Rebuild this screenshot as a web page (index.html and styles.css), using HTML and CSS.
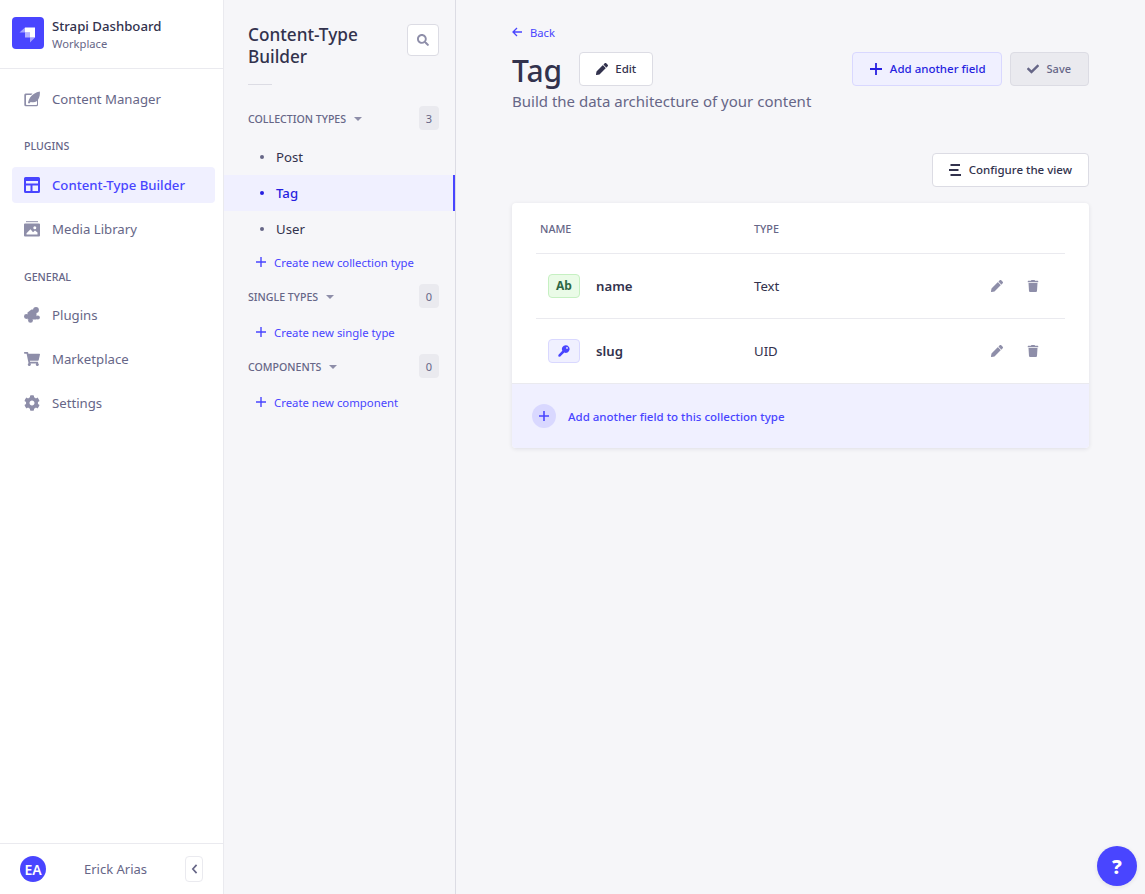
FILE: index.html
```html
<!DOCTYPE html>
<html lang="en">
<head>
    <meta charset="UTF-8">
    <title>Strapi Dashboard</title>
    <meta name="viewport" content="width=device-width, initial-scale=1.0">
    <link rel="stylesheet" href="styles.css">
</head>
<body>
    <div class="app">
        <aside class="sidebar">
            <div class="brand">
                <div class="brand-logo">
                    <svg viewBox="0 0 32 32" width="32" height="32">
                        <path d="M13 10.500h10v10h-5v-5h-5z" fill="#fff"/>
                        <path d="M13 10.500v5H7.500z" fill="#fff" opacity=".5"/>
                        <path d="M13 15.500h5v5h-5z" fill="#fff" opacity=".6"/>
                        <path d="M18 20.500h5l-5 5z" fill="#fff" opacity=".5"/>
                    </svg>
                </div>
                <div class="brand-text">
                    <div class="brand-name">Strapi Dashboard</div>
                    <div class="brand-sub">Workplace</div>
                </div>
            </div>

            <nav class="nav">
                <a class="nav-item">
                    <svg class="nav-icon" viewBox="0 0 16 16"><path d="M2 2.500h6.500L7.200 4H2.700a.7.7 0 0 0-.7.7v8.600c0 .4.300.7.7.7h9.600c.4 0 .7-.3.700-.7V9l1-1.200v6a1.500 1.500 0 0 1-1.500 1.500H1.800A1.500 1.500 0 0 1 .3 13.800V4a1.500 1.500 0 0 1 1.700-1.500z"/><path d="M15.800.5c.5 3.800-.6 7.800-3.200 9.800-1.600 1.200-4 1.300-5.900.6L5.200 12.600 4 12c1-4.500 3.500-9.800 11.800-11.500z"/></svg>
                    Content Manager
                </a>
                <div class="nav-label nav-label-first">PLUGINS</div>
                <a class="nav-item active">
                    <svg class="nav-icon" viewBox="0 0 16 16"><path fill-rule="evenodd" d="M1.500 0h13A1.500 1.500 0 0 1 16 1.500v13a1.500 1.500 0 0 1-1.500 1.500h-13A1.500 1.500 0 0 1 0 14.500v-13A1.500 1.500 0 0 1 1.500 0zM2 4v2.500h12V4zM2 8.500V14h4.500V8.500zM8.500 8.500V14H14V8.500z"/></svg>
                    Content-Type Builder
                </a>
                <a class="nav-item">
                    <svg class="nav-icon" viewBox="0 0 16 16"><path d="M2 0h12v1.200H2z" opacity=".8"/><path fill-rule="evenodd" d="M1 2.500h14a1 1 0 0 1 1 1v11a1 1 0 0 1-1 1H1a1 1 0 0 1-1-1v-11a1 1 0 0 1 1-1zm9.800 2.700a1.500 1.500 0 1 0 0 3 1.500 1.500 0 0 0 0-3zM2.500 13.500h11v-2l-2.500-2-2 1.700-2.500-3-4 4z"/></svg>
                    Media Library
                </a>
                <div class="nav-label">GENERAL</div>
                <a class="nav-item">
                    <svg class="nav-icon" viewBox="0 0 16 16"><path d="M3.500 5.500L7.500 2.500h5v10H3.500z"/><circle cx="12" cy="3" r="2.900"/><circle cx="2.400" cy="9.500" r="2.400"/><circle cx="6.500" cy="13.400" r="2.400"/><circle cx="13.800" cy="10.500" r="2.100"/></svg>
                    Plugins
                </a>
                <a class="nav-item">
                    <svg class="nav-icon" viewBox="0 0 576 512"><path d="M528.120 301.319l47.273-208C578.806 78.301 567.391 64 551.990 64H159.208l-9.166-44.810C147.758 8.021 137.930 0 126.529 0H24C10.745 0 0 10.745 0 24v16c0 13.255 10.745 24 24 24h69.883l70.248 343.435C147.325 417.100 136 435.222 136 456c0 30.928 25.072 56 56 56s56-25.072 56-56c0-15.674-6.447-29.835-16.824-40h209.647C430.447 426.165 424 440.326 424 456c0 30.928 25.072 56 56 56s56-25.072 56-56c0-22.172-12.888-41.332-31.579-50.405l5.517-24.276c3.413-15.018-8.002-29.319-23.403-29.319H218.117l-6.545-32h293.145c11.206 0 20.920-7.754 23.403-18.681z"/></svg>
                    Marketplace
                </a>
                <a class="nav-item">
                    <svg class="nav-icon" viewBox="0 0 512 512"><path d="M487.400 315.700l-42.600-24.600c4.300-23.200 4.300-47 0-70.200l42.600-24.600c4.900-2.800 7.100-8.600 5.500-14-11.100-35.600-30-67.800-54.700-94.600-3.800-4.100-10-5.100-14.800-2.300L380.800 110c-17.900-15.400-38.500-27.300-60.800-35.100V25.800c0-5.600-3.900-10.500-9.400-11.700-36.700-8.200-74.300-7.800-109.200 0-5.500 1.200-9.400 6.100-9.400 11.700V75c-22.200 7.900-42.800 19.800-60.800 35.100L88.700 85.500c-4.900-2.800-11-1.900-14.800 2.300-24.700 26.700-43.600 58.900-54.700 94.600-1.700 5.400.6 11.200 5.500 14L67.300 221c-4.300 23.200-4.300 47 0 70.200l-42.600 24.600c-4.900 2.800-7.100 8.600-5.500 14 11.100 35.600 30 67.800 54.700 94.600 3.800 4.100 10 5.100 14.800 2.300l42.600-24.600c17.900 15.400 38.500 27.300 60.800 35.100v49.200c0 5.600 3.900 10.500 9.400 11.700 36.700 8.200 74.300 7.800 109.200 0 5.500-1.200 9.400-6.100 9.400-11.700v-49.200c22.200-7.900 42.800-19.800 60.800-35.100l42.600 24.600c4.900 2.800 11 1.900 14.800-2.300 24.700-26.700 43.600-58.900 54.700-94.600 1.500-5.500-.7-11.300-5.600-14.100zM256 336c-44.100 0-80-35.900-80-80s35.900-80 80-80 80 35.900 80 80-35.900 80-80 80z"/></svg>
                    Settings
                </a>
            </nav>

            <div class="user">
                <div class="avatar">EA</div>
                <div class="user-name">Erick Arias</div>
                <button class="collapse">
                    <svg viewBox="0 0 8 12" width="7" height="10"><path d="M6.500 1L2 6l4.500 5" fill="none" stroke="#666687" stroke-width="2"/></svg>
                </button>
            </div>
        </aside>

        <section class="subnav">
            <div class="subnav-head">
                <h2>Content-Type Builder</h2>
                <button class="search-btn">
                    <svg viewBox="0 0 512 512" width="12" height="12"><path fill="#8e8ea9" d="M505 442.700L405.300 343c-4.500-4.500-10.600-7-17-7H372c27.600-35.300 44-79.700 44-128C416 93.100 322.900 0 208 0S0 93.100 0 208s93.100 208 208 208c48.300 0 92.700-16.400 128-44v16.300c0 6.400 2.500 12.500 7 17l99.700 99.700c9.400 9.400 24.600 9.400 33.900 0l28.300-28.300c9.400-9.400 9.400-24.600.1-34zM208 336c-70.700 0-128-57.200-128-128 0-70.700 57.200-128 128-128 70.700 0 128 57.200 128 128 0 70.700-57.200 128-128 128z"/></svg>
                </button>
            </div>
            <div class="subnav-rule"></div>

            <div class="group">
                <span class="group-name">COLLECTION TYPES <i class="caret"></i></span>
                <span class="count">3</span>
            </div>
            <ul class="types">
                <li>Post</li>
                <li class="active">Tag</li>
                <li>User</li>
            </ul>
            <a class="create">
                <svg class="plus" viewBox="0 0 10 10"><path d="M4.300 0h1.400v4.300H10v1.400H5.700V10H4.300V5.700H0V4.300h4.300z"/></svg>
                Create new collection type
            </a>

            <div class="group">
                <span class="group-name">SINGLE TYPES <i class="caret"></i></span>
                <span class="count">0</span>
            </div>
            <a class="create create-after">
                <svg class="plus" viewBox="0 0 10 10"><path d="M4.300 0h1.400v4.300H10v1.400H5.700V10H4.300V5.700H0V4.300h4.300z"/></svg>
                Create new single type
            </a>

            <div class="group">
                <span class="group-name">COMPONENTS <i class="caret"></i></span>
                <span class="count">0</span>
            </div>
            <a class="create create-after">
                <svg class="plus" viewBox="0 0 10 10"><path d="M4.300 0h1.400v4.300H10v1.400H5.700V10H4.300V5.700H0V4.300h4.300z"/></svg>
                Create new component
            </a>
        </section>

        <main class="main">
            <a class="back">
                <svg viewBox="0 0 10 10" width="10" height="10"><path d="M5 1L1 5l4 4M1 5h9" fill="none" stroke="#4945ff" stroke-width="1.300"/></svg>
                Back
            </a>
            <div class="title-row">
                <div class="title-left">
                    <h1>Tag</h1>
                    <button class="btn btn-edit">
                        <svg viewBox="0 0 512 512" width="12" height="12"><path fill="#32324d" d="M497.900 142.100l-46.100 46.100c-4.700 4.700-12.300 4.700-17 0l-111-111c-4.700-4.700-4.700-12.300 0-17l46.100-46.100c18.700-18.700 49.100-18.700 67.900 0l60.100 60.100c18.800 18.700 18.800 49.100 0 67.900zM284.200 99.800L21.600 362.400.4 483.900c-2.900 16.400 11.400 30.600 27.800 27.800l121.500-21.300 262.600-262.600c4.700-4.700 4.700-12.300 0-17l-111-111c-4.800-4.700-12.400-4.700-17.100 0z"/></svg>
                        Edit
                    </button>
                </div>
                <div class="title-actions">
                    <button class="btn btn-add">
                        <svg viewBox="0 0 12 12" width="12" height="12"><path fill="#271fe0" d="M5.100 0h1.800v5.100H12v1.800H6.900V12H5.100V6.900H0V5.100h5.100z"/></svg>
                        Add another field
                    </button>
                    <button class="btn btn-save">
                        <svg viewBox="0 0 512 512" width="12" height="12"><path fill="#666687" d="M173.898 439.404l-166.400-166.400c-9.997-9.997-9.997-26.206 0-36.204l36.203-36.204c9.997-9.998 26.207-9.998 36.204 0L192 312.690 432.095 72.596c9.997-9.997 26.207-9.997 36.204 0l36.203 36.204c9.997 9.997 9.997 26.206 0 36.204l-294.400 294.401c-9.998 9.997-26.207 9.997-36.204-.001z"/></svg>
                        Save
                    </button>
                </div>
            </div>
            <p class="subtitle">Build the data architecture of your content</p>

            <div class="toolbar">
                <button class="btn btn-config">
                    <svg viewBox="0 0 12 12" width="12" height="12"><path fill="#32324d" d="M1.500 0H11v2H1.500zM0 5h9.500v2H0zM1.500 10H12v2H1.500z"/></svg>
                    Configure the view
                </button>
            </div>

            <div class="card">
                <table class="fields">
                    <thead>
                        <tr>
                            <th class="col-name">NAME</th>
                            <th>TYPE</th>
                            <th class="col-actions"></th>
                        </tr>
                    </thead>
                    <tbody>
                        <tr>
                            <td><div class="field"><span class="tag tag-text">Ab</span><b>name</b></div></td>
                            <td>Text</td>
                            <td>
                                <div class="actions">
                                    <svg viewBox="0 0 512 512" width="12" height="12"><path d="M497.900 142.100l-46.100 46.100c-4.700 4.700-12.300 4.700-17 0l-111-111c-4.700-4.700-4.700-12.300 0-17l46.100-46.100c18.700-18.700 49.100-18.700 67.900 0l60.100 60.100c18.800 18.700 18.800 49.100 0 67.900zM284.200 99.800L21.600 362.400.4 483.900c-2.900 16.400 11.400 30.600 27.800 27.800l121.500-21.300 262.600-262.600c4.700-4.700 4.700-12.300 0-17l-111-111c-4.800-4.700-12.400-4.700-17.100 0z"/></svg>
                                    <svg viewBox="0 0 448 512" width="12" height="12"><path d="M432 32H312l-9.400-18.700A24 24 0 0 0 281.100 0H166.800a23.720 23.720 0 0 0-21.400 13.300L136 32H16A16 16 0 0 0 0 48v32a16 16 0 0 0 16 16h416a16 16 0 0 0 16-16V48a16 16 0 0 0-16-16zM53.200 467a48 48 0 0 0 47.900 45h245.800a48 48 0 0 0 47.900-45L416 128H32z"/></svg>
                                </div>
                            </td>
                        </tr>
                        <tr>
                            <td>
                                <div class="field">
                                    <span class="tag tag-uid">
                                        <svg viewBox="0 0 12 12" width="12" height="12"><path fill="#4945ff" fill-rule="evenodd" d="M7.800.3a3.800 3.800 0 1 1-1.500 7.300L2 11.800.4 11.600l-.1-1.600 4-4.200A3.800 3.800 0 0 1 7.800.3zm1.200 1.700a.9.9 0 1 0 0 1.800.9.9 0 0 0 0-1.800z"/></svg>
                                    </span>
                                    <b>slug</b>
                                </div>
                            </td>
                            <td>UID</td>
                            <td>
                                <div class="actions">
                                    <svg viewBox="0 0 512 512" width="12" height="12"><path d="M497.900 142.100l-46.100 46.100c-4.700 4.700-12.300 4.700-17 0l-111-111c-4.700-4.700-4.700-12.300 0-17l46.100-46.100c18.700-18.700 49.100-18.700 67.900 0l60.100 60.100c18.800 18.700 18.800 49.100 0 67.900zM284.200 99.800L21.600 362.400.4 483.900c-2.900 16.400 11.400 30.600 27.800 27.800l121.500-21.300 262.600-262.600c4.700-4.700 4.700-12.300 0-17l-111-111c-4.800-4.700-12.400-4.700-17.100 0z"/></svg>
                                    <svg viewBox="0 0 448 512" width="12" height="12"><path d="M432 32H312l-9.400-18.700A24 24 0 0 0 281.100 0H166.800a23.720 23.720 0 0 0-21.400 13.300L136 32H16A16 16 0 0 0 0 48v32a16 16 0 0 0 16 16h416a16 16 0 0 0 16-16V48a16 16 0 0 0-16-16zM53.200 467a48 48 0 0 0 47.900 45h245.800a48 48 0 0 0 47.900-45L416 128H32z"/></svg>
                                </div>
                            </td>
                        </tr>
                    </tbody>
                </table>
                <a class="add-row">
                    <span class="add-circle">
                        <svg viewBox="0 0 10 10" width="10" height="10"><path fill="#4945ff" d="M4.200 0h1.600v4.200H10v1.600H5.800V10H4.200V5.800H0V4.200h4.200z"/></svg>
                    </span>
                    Add another field to this collection type
                </a>
            </div>
        </main>
    </div>

    <button class="help">?</button>
</body>
</html>
```

FILE: styles.css
```css
* { box-sizing: border-box; }
html, body { height: 100%; }
body { margin: 0; font-family: "Noto Sans", Inter, sans-serif; font-size: 13.2px; color: #32324d; background: #f6f6f9; overflow: hidden; }
button { font-family: inherit; cursor: pointer; }
a { cursor: pointer; }
.app { display: flex; height: 894px; }

/* left menu */
.sidebar { width: 224px; flex: none; display: flex; flex-direction: column; background: #fff; border-right: 1px solid #eaeaef; }
.brand { height: 69px; display: flex; align-items: center; gap: 8px; padding: 0 12px 2px; border-bottom: 1px solid #eaeaef; }
.brand-logo { width: 32px; height: 32px; background: #4945ff; border-radius: 4px; }
.brand-logo svg { display: block; }
.brand-text { margin-top: 4px; }
.brand-name { font-size: 13.2px; font-weight: 500; line-height: 18px; color: #32324d; }
.brand-sub { font-size: 11.2px; line-height: 18px; color: #666687; }
.nav { flex: 1; padding: 12px 8px 0 12px; }
.nav-item { display: flex; align-items: center; height: 36px; padding: 0 12px; margin-bottom: 8px; gap: 12px; border-radius: 4px; color: #666687; font-size: 13.2px; }
.nav-icon { width: 16px; height: 16px; flex: none; fill: #8e8ea9; }
.nav-item.active { background: #f0f0ff; color: #4945ff; font-weight: 500; }
.nav-item.active .nav-icon { fill: #4945ff; }
.nav-label { padding-left: 12px; margin-top: 22px; margin-bottom: 12px; font-size: 10.6px; line-height: 16px; font-weight: 500; color: #666687; }
.nav-label-first { margin-top: 21px; margin-bottom: 13px; }
.user { height: 51px; display: flex; align-items: center; padding: 0 20px; border-top: 1px solid #eaeaef; }
.avatar { width: 26px; height: 26px; border-radius: 50%; background: #4945ff; color: #fff; font-size: 14px; font-weight: 600; display: flex; align-items: center; justify-content: center; }
.user-name { flex: 1; text-align: center; color: #666687; font-size: 13px; }
.collapse { width: 18px; height: 26px; padding: 0; display: flex; align-items: center; justify-content: center; background: #fff; border: 1px solid #eaeaef; border-radius: 4px; }

/* sub navigation */
.subnav { width: 232px; flex: none; padding-top: 24px; border-right: 1px solid #dcdce4; background: #f6f6f9; }
.subnav-head { display: flex; justify-content: space-between; align-items: flex-start; padding: 0 16px 0 24px; }
.subnav-head h2 { margin: 0; width: 130px; font-size: 17.2px; line-height: 22px; font-weight: 500; color: #32324d; }
.search-btn { width: 32px; height: 32px; padding: 0; display: flex; align-items: center; justify-content: center; background: #fff; border: 1px solid #dcdce4; border-radius: 4px; }
.subnav-rule { width: 24px; height: 1px; margin: 16px 0 21px 24px; background: #dcdce4; }
.group { display: flex; justify-content: space-between; align-items: center; height: 24px; padding: 0 16px 0 24px; }
.group-name { padding-top: 1px; font-size: 10.6px; font-weight: 500; color: #666687; display: flex; align-items: center; gap: 6px; }
.caret { width: 0; height: 0; margin-left: 2px; border-left: 4px solid transparent; border-right: 4px solid transparent; border-top: 4px solid #8e8ea9; }
.count { width: 20px; height: 24px; background: #eaeaef; border-radius: 4px; color: #666687; font-size: 11px; display: flex; align-items: center; justify-content: center; }
.types { list-style: none; margin: 9px 0 0; padding: 0; }
.types li { height: 36px; line-height: 36px; padding-left: 52px; position: relative; color: #32324d; font-size: 13.2px; }
.types li::before { content: ""; position: absolute; left: 36px; top: 16px; width: 4px; height: 4px; border-radius: 50%; background: #666687; }
.types li.active { background: #f0f0ff; color: #271fe0; font-weight: 500; border-right: 2px solid #4945ff; }
.types li.active::before { background: #271fe0; }
.create { display: flex; align-items: center; gap: 8px; height: 16px; margin: 7px 0 14px 32px; font-size: 11.35px; color: #4945ff; }
.create-after { margin-top: 16px; }
.plus { width: 10px; height: 10px; fill: #4945ff; flex: none; }

/* main content */
.main { flex: 1; padding: 24px 56px 0; }
.back { display: flex; align-items: center; gap: 8px; height: 16px; font-size: 11.2px; color: #4945ff; }
.title-row { display: flex; justify-content: space-between; align-items: flex-start; margin-top: 12px; }
.title-left { display: flex; align-items: flex-start; gap: 17px; }
.title-left h1 { margin: 0; font-size: 30px; line-height: 38px; font-weight: 500; color: #32324d; }
.title-actions { display: flex; gap: 8px; }
.btn { height: 34px; padding: 0 16px 1px; display: inline-flex; align-items: center; gap: 8px; font-size: 11.5px; font-weight: 500; color: #32324d; background: #fff; border: 1px solid #dcdce4; border-radius: 4px; }
.btn-edit { gap: 7px; }
.btn-add { padding-left: 17px; padding-right: 15px; background: #f0f0ff; border-color: #d9d8ff; color: #271fe0; }
.btn-save { font-size: 11px; padding-right: 17px; background: #eaeaef; border-color: #dcdce4; color: #666687; }
.subtitle { margin: 1px 0 0; font-size: 15px; line-height: 20px; color: #666687; }
.toolbar { display: flex; justify-content: flex-end; margin-top: 42px; }
.card { margin-top: 16px; background: #fff; border-radius: 4px; box-shadow: 0 1px 4px rgba(33, 33, 52, .1); overflow: hidden; }
.fields { width: calc(100% - 48px); margin: 0 24px; border-collapse: collapse; table-layout: fixed; }
.fields th { height: 50px; padding: 2px 0 0 4px; text-align: left; font-size: 10.8px; font-weight: 500; color: #666687; border-bottom: 1px solid #eaeaef; }
.col-name { width: 214px; }
.col-actions { width: 110px; }
.fields td { height: 65px; padding: 0 0 0 4px; font-size: 13.2px; color: #32324d; border-bottom: 1px solid #eaeaef; }
.fields tbody tr:last-child td { border-bottom: 0; }
.field { display: flex; align-items: center; gap: 16px; padding-left: 8px; }
.field b { font-size: 13.2px; font-weight: 600; }
.tag { width: 32px; height: 24px; display: flex; align-items: center; justify-content: center; border-radius: 4px; border: 1px solid; font-size: 12px; font-weight: 700; }
.tag-text { background: #eafbe7; border-color: #c6f0c2; color: #2f6846; }
.tag-uid { background: #f0f0ff; border-color: #d9d8ff; }
.actions { display: flex; justify-content: flex-end; gap: 24px; padding-right: 26px; }
.actions svg { fill: #8e8ea9; }
.add-row { height: 65px; display: flex; align-items: center; gap: 12px; padding-left: 20px; background: #f0f0ff; border-top: 1px solid #eaeaef; color: #4945ff; font-size: 11.5px; font-weight: 500; }
.add-circle { width: 24px; height: 24px; border-radius: 50%; background: #d9d8ff; display: flex; align-items: center; justify-content: center; }

.help { position: absolute; right: 8px; bottom: 8px; width: 40px; height: 40px; padding: 0; border: 0; border-radius: 50%; background: #4945ff; color: #fff; font-size: 20px; font-weight: 800; box-shadow: 0 1px 4px rgba(33, 33, 52, .1); }
```
